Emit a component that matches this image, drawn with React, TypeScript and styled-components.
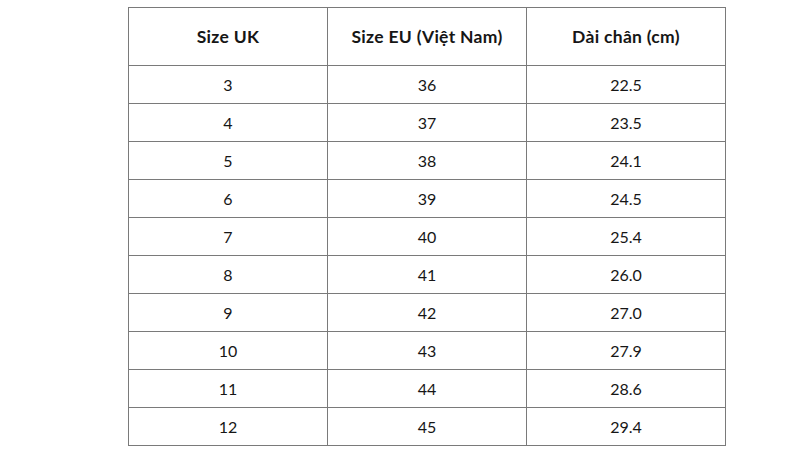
import styled, { createGlobalStyle } from "styled-components";

const rows: [string, string, string][] = [
  ["3", "36", "22.5"],
  ["4", "37", "23.5"],
  ["5", "38", "24.1"],
  ["6", "39", "24.5"],
  ["7", "40", "25.4"],
  ["8", "41", "26.0"],
  ["9", "42", "27.0"],
  ["10", "43", "27.9"],
  ["11", "44", "28.6"],
  ["12", "45", "29.4"],
];

export default function App() {
  return (
    <>
      <GlobalStyle />
      <Page>
        <SizeTable>
          <thead>
            <tr>
              <HeadCell>Size UK</HeadCell>
              <HeadCell>Size EU (Việt Nam)</HeadCell>
              <HeadCell>Dài chân (cm)</HeadCell>
            </tr>
          </thead>
          <tbody>
            {rows.map((r) => (
              <tr key={r[0]}>
                {r.map((v, i) => (
                  <Cell key={i}>{v}</Cell>
                ))}
              </tr>
            ))}
          </tbody>
        </SizeTable>
      </Page>
    </>
  );
}

const GlobalStyle = createGlobalStyle`
  html, body {
    margin: 0;
    padding: 0;
    background: #ffffff;
  }
  body {
    font-family: Lato, "Open Sans", sans-serif;
    color: #161616;
  }
`;

const Page = styled.div`
  width: 800px;
  height: 450px;
  padding: 7px 0 0 128px;
  box-sizing: border-box;
`;

const SizeTable = styled.table`
  border-collapse: collapse;
  width: 598px;
  table-layout: fixed;
  border: 1px solid #7a7a7a;
`;

const HeadCell = styled.th`
  height: 57px;
  padding: 0;
  border: 1px solid #7a7a7a;
  font-size: 17.5px;
  font-weight: 700;
  text-align: center;
  vertical-align: middle;
  letter-spacing: 0.3px;
`;

const Cell = styled.td`
  height: 37px;
  padding: 0;
  border: 1px solid #7a7a7a;
  font-size: 16px;
  font-weight: 400;
  text-align: center;
  vertical-align: middle;
`;
